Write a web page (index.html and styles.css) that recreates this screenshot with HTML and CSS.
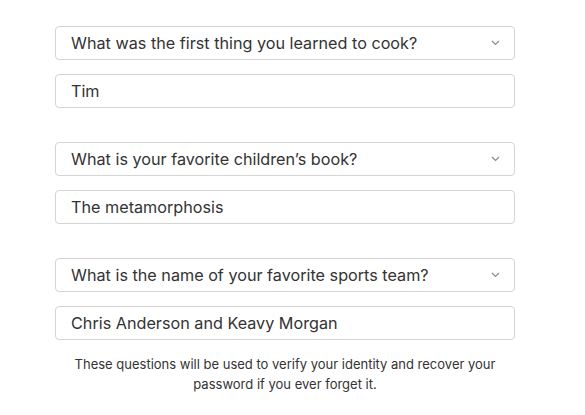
FILE: index.html
```html
<!DOCTYPE html>
<html>
<head>
<meta charset="utf-8">
<link rel="stylesheet" href="styles.css">
</head>
<body>
<div class="form">
  <div class="groups">
    <div class="group">
      <div class="field select"><span>What was the first thing you learned to cook?</span>
        <svg class="chev" width="9" height="6" viewBox="0 0 9 6"><path d="M1 1 L4.5 4.5 L8 1" fill="none" stroke="#8a8a8a" stroke-width="1.2"/></svg></div>
      <div class="field">Tim</div>
    </div>
    <div class="group">
      <div class="field select"><span>What is your favorite children’s book?</span>
        <svg class="chev" width="9" height="6" viewBox="0 0 9 6"><path d="M1 1 L4.5 4.5 L8 1" fill="none" stroke="#8a8a8a" stroke-width="1.2"/></svg></div>
      <div class="field">The metamorphosis</div>
    </div>
    <div class="group">
      <div class="field select"><span>What is the name of your favorite sports team?</span>
        <svg class="chev" width="9" height="6" viewBox="0 0 9 6"><path d="M1 1 L4.5 4.5 L8 1" fill="none" stroke="#8a8a8a" stroke-width="1.2"/></svg></div>
      <div class="field">Chris Anderson and Keavy Morgan</div>
    </div>
  </div>
  <p class="note">These questions will be used to verify your identity and recover your password if you ever forget it.</p>
</div>
</body>
</html>
```
FILE: styles.css
```css
html, body { margin: 0; padding: 0; background: #fff; }
body { font-family: Inter, "Open Sans", sans-serif; color: #333; }
.form { width: 460px; margin: 0 0 0 55px; padding-top: 26px; display: flex; flex-direction: column; gap: 14px; }
.groups { display: flex; flex-direction: column; gap: 34px; }
.group { display: flex; flex-direction: column; gap: 14px; }
.field { box-sizing: border-box; height: 34px; border: 1px solid #d4d4d4; border-radius: 4px; padding: 0 15px; display: flex; align-items: center; font-size: 16.2px; color: #333; }
.select { justify-content: space-between; padding-right: 14px; }
.chev { flex: none; }
.note { margin: 0; padding: 0 10px; text-align: center; font-size: 13px; line-height: 20px; color: #333; }
```
